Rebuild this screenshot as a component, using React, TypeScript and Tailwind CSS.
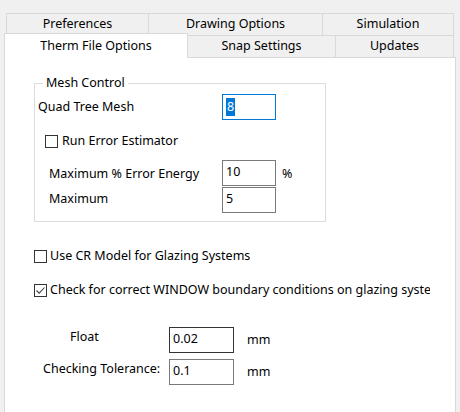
import { Fragment } from "react";

function Checkbox({ checked }: { checked?: boolean }) {
  return (
    <span className="w-[13px] h-[13px] border border-[#333333] bg-white flex items-center justify-center shrink-0">
      {checked && (
        <svg width="11" height="11" viewBox="0 0 11 11" fill="none">
          <path d="M1.5 5.5 L4.2 8.2 L9.5 2.5" stroke="#444444" strokeWidth="1.1" />
        </svg>
      )}
    </span>
  );
}

function Field({ value, focus, dark, w = 54 }: { value: string; focus?: boolean; dark?: boolean; w?: number }) {
  const border = focus ? "border-[#0078d7]" : dark ? "border-[#333333]" : "border-[#7a7a7a]";
  return (
    <div
      className={`h-[26px] border bg-white flex items-center pl-[3px] ${border} ${w === 54 ? "w-[54px]" : "w-[65px]"}`}
    >
      {focus ? (
        <span className="bg-[#0078d7] text-white px-px leading-[18px]">{value}</span>
      ) : (
        <span className="leading-[18px] -mt-[2px]">{value}</span>
      )}
    </div>
  );
}

const topTabs = [
  { label: "Preferences", cls: "w-[143px]" },
  { label: "Drawing Options", cls: "w-[174px] border-l-0" },
  { label: "Simulation", cls: "w-[131px] border-l-0" },
];

export default function App() {
  return (
    <div
      className="w-[460px] h-[412px] bg-[#f0f0f0] overflow-hidden text-[12.5px] text-black pt-[13px]"
      style={{ fontFamily: '"Noto Sans", "Open Sans", sans-serif' }}
    >
      {/* tab strip, back row */}
      <div className="flex ml-[6px] h-[22px]">
        {topTabs.map((t) => (
          <div
            key={t.label}
            className={`${t.cls} h-[22px] border border-b-0 border-[#d9d9d9] flex items-center justify-center`}
          >
            {t.label}
          </div>
        ))}
      </div>

      {/* tab strip, front row */}
      <div className="flex ml-[4px] h-[22px]">
        <div className="w-[184px] h-[25px] -mt-[2px] border border-b-0 border-[#d9d9d9] bg-white relative z-10 flex items-center justify-center">
          Therm File Options
        </div>
        <div className="w-[148px] h-[22px] border border-l-0 border-b-0 border-[#d9d9d9] flex items-center justify-center">
          Snap Settings
        </div>
        <div className="w-[118px] h-[22px] border border-l-0 border-b-0 border-[#d9d9d9] flex items-center justify-center">
          Updates
        </div>
      </div>

      {/* page */}
      <div className="ml-[4px] w-[452px] h-[360px] border border-[#d9d9d9] bg-white">
        <fieldset className="ml-[29px] mt-[17px] w-[292px] h-[147px] border border-[#dcdcdc] pl-[3px]">
          <legend className="ml-[5px] px-[3px] leading-[16px]">Mesh Control</legend>

          <div className="flex items-center mt-[3px]">
            <span className="w-[184px]">Quad Tree Mesh</span>
            <Field value="8" focus />
          </div>

          <div className="flex items-center gap-[4px] ml-[7px] mt-[12px]">
            <Checkbox />
            <span>Run Error Estimator</span>
          </div>

          <div className="flex items-center mt-[9px] ml-[11px]">
            <span className="w-[173px] pt-[4px]">Maximum % Error Energy</span>
            <Field value="10" />
            <span className="ml-[6px] pt-[3px]">%</span>
          </div>

          <div className="flex items-center mt-[1px] ml-[11px]">
            <span className="w-[173px]">Maximum</span>
            <Field value="5" />
          </div>
        </fieldset>

        <div className="ml-[29px] mt-[25px] flex items-center gap-[3px]">
          <Checkbox />
          <span>Use CR Model for Glazing Systems</span>
        </div>

        <div className="ml-[29px] mt-[15px] w-[396px] overflow-hidden whitespace-nowrap flex items-center gap-[3px]">
          <Checkbox checked />
          <span>Check for correct WINDOW boundary conditions on glazing systems</span>
        </div>

        <div className="grid grid-cols-[164px_65px_auto] items-center gap-y-[6px] mt-[27px]">
          {[
            { label: "Float", pad: "pl-[65px]", value: "0.02", dark: true },
            { label: "Checking Tolerance:", pad: "pl-[38px]", value: "0.1", dark: false },
          ].map((r) => (
            <Fragment key={r.label}>
              <span className={`${r.pad} -mt-[4px]`}>{r.label}</span>
              <Field value={r.value} dark={r.dark} w={65} />
              <span className="pl-[13px] pt-[2px]">mm</span>
            </Fragment>
          ))}
        </div>
      </div>
    </div>
  );
}
